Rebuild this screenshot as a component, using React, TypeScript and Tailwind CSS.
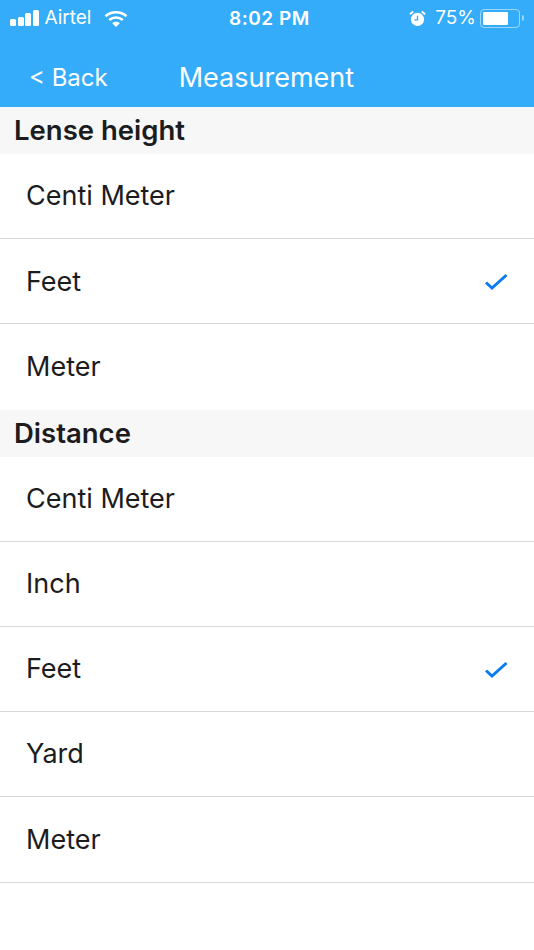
const sections = [
  { title: 'Lense height', options: ['Centi Meter', 'Feet', 'Meter'], selected: 'Feet' },
  { title: 'Distance', options: ['Centi Meter', 'Inch', 'Feet', 'Yard', 'Meter'], selected: 'Feet' },
];

function SignalBars() {
  return (
    <div className="flex items-end gap-[1.5px]">
      <div className="h-[7px] w-[6px] rounded-[1.5px] bg-white" />
      <div className="h-[9px] w-[6px] rounded-[1.5px] bg-white" />
      <div className="h-[13px] w-[6px] rounded-[1.5px] bg-white" />
      <div className="h-[16px] w-[6px] rounded-[1.5px] bg-white" />
    </div>
  );
}

function Wifi() {
  return (
    <svg width="24" height="17" viewBox="0 0 24 17" fill="none">
      <path d="M1.5 6.2C7.5 1 16.5 1 22.5 6.2" stroke="white" strokeWidth="2.6" />
      <path d="M5.2 10C9.2 6.6 14.8 6.6 18.8 10" stroke="white" strokeWidth="2.6" />
      <path d="M12 17L8.2 13.2C10.4 11.4 13.6 11.4 15.8 13.2Z" fill="white" />
    </svg>
  );
}

function Alarm() {
  return (
    <svg width="17" height="17" viewBox="0 0 18 18" fill="none">
      <circle cx="9" cy="10" r="7" fill="white" />
      <path d="M9 6V10.5H5.8" stroke="#35acfa" strokeWidth="1.4" />
      <path d="M1 4.5L4.5 1.5" stroke="white" strokeWidth="2" />
      <path d="M17 4.5L13.5 1.5" stroke="white" strokeWidth="2" />
    </svg>
  );
}

function Battery() {
  return (
    <div className="flex items-center gap-[2px]">
      <div className="h-[19px] w-[40px] rounded-[4px] border border-white/50 p-[2px]">
        <div className="h-full w-[25px] rounded-[1px] bg-white" />
      </div>
      <div className="h-[6px] w-[2px] rounded-r-full bg-white/50" />
    </div>
  );
}

function Check() {
  return (
    <svg width="24" height="18" viewBox="0 0 24 18" fill="none">
      <path d="M2 9.5L8 15L22.5 2" stroke="#0a7bf5" strokeWidth="3" />
    </svg>
  );
}

export default function App() {
  return (
    <div className="min-h-[950px] bg-white font-['Inter',sans-serif] text-[#1c1c1e]">
      {/* Status bar + nav */}
      <div className="h-[107px] bg-[#35acfa] text-white">
        <div className="relative flex h-[36px] items-center justify-between px-[10px]">
          <div className="flex items-center">
            <SignalBars />
            <span className="ml-[6px] text-[19px]">Airtel</span>
            <div className="ml-[13px]">
              <Wifi />
            </div>
          </div>
          <span className="absolute left-[229px] top-[5px] text-[19px] font-semibold tracking-[0.5px]">8:02 PM</span>
          <div className="flex items-center">
            <Alarm />
            <span className="ml-[9px] mr-[4px] text-[19px]">75%</span>
            <Battery />
          </div>
        </div>
        <div className="flex h-[71px] items-center pt-[13px]">
          <span className="ml-[29px] text-[24px]">{'< Back'}</span>
          <span className="ml-[71px] text-[27px]">Measurement</span>
        </div>
      </div>

      {sections.map((section) => (
        <div key={section.title}>
          <div className="flex h-[47px] items-center bg-[#f7f7f7] pl-[14px] pt-[1px] text-[27.5px] font-semibold">
            {section.title}
          </div>
          {section.options.map((option, i) => (
            <div
              key={option}
              className={`flex h-[85.2px] items-center justify-between px-[26px] pt-[1px] text-[27px] ${
                section.title === 'Lense height' && i === section.options.length - 1
                  ? ''
                  : 'border-b border-[#d8d8d8]'
              }`}
            >
              <span>{option}</span>
              {option === section.selected && <Check />}
            </div>
          ))}
        </div>
      ))}
    </div>
  );
}
